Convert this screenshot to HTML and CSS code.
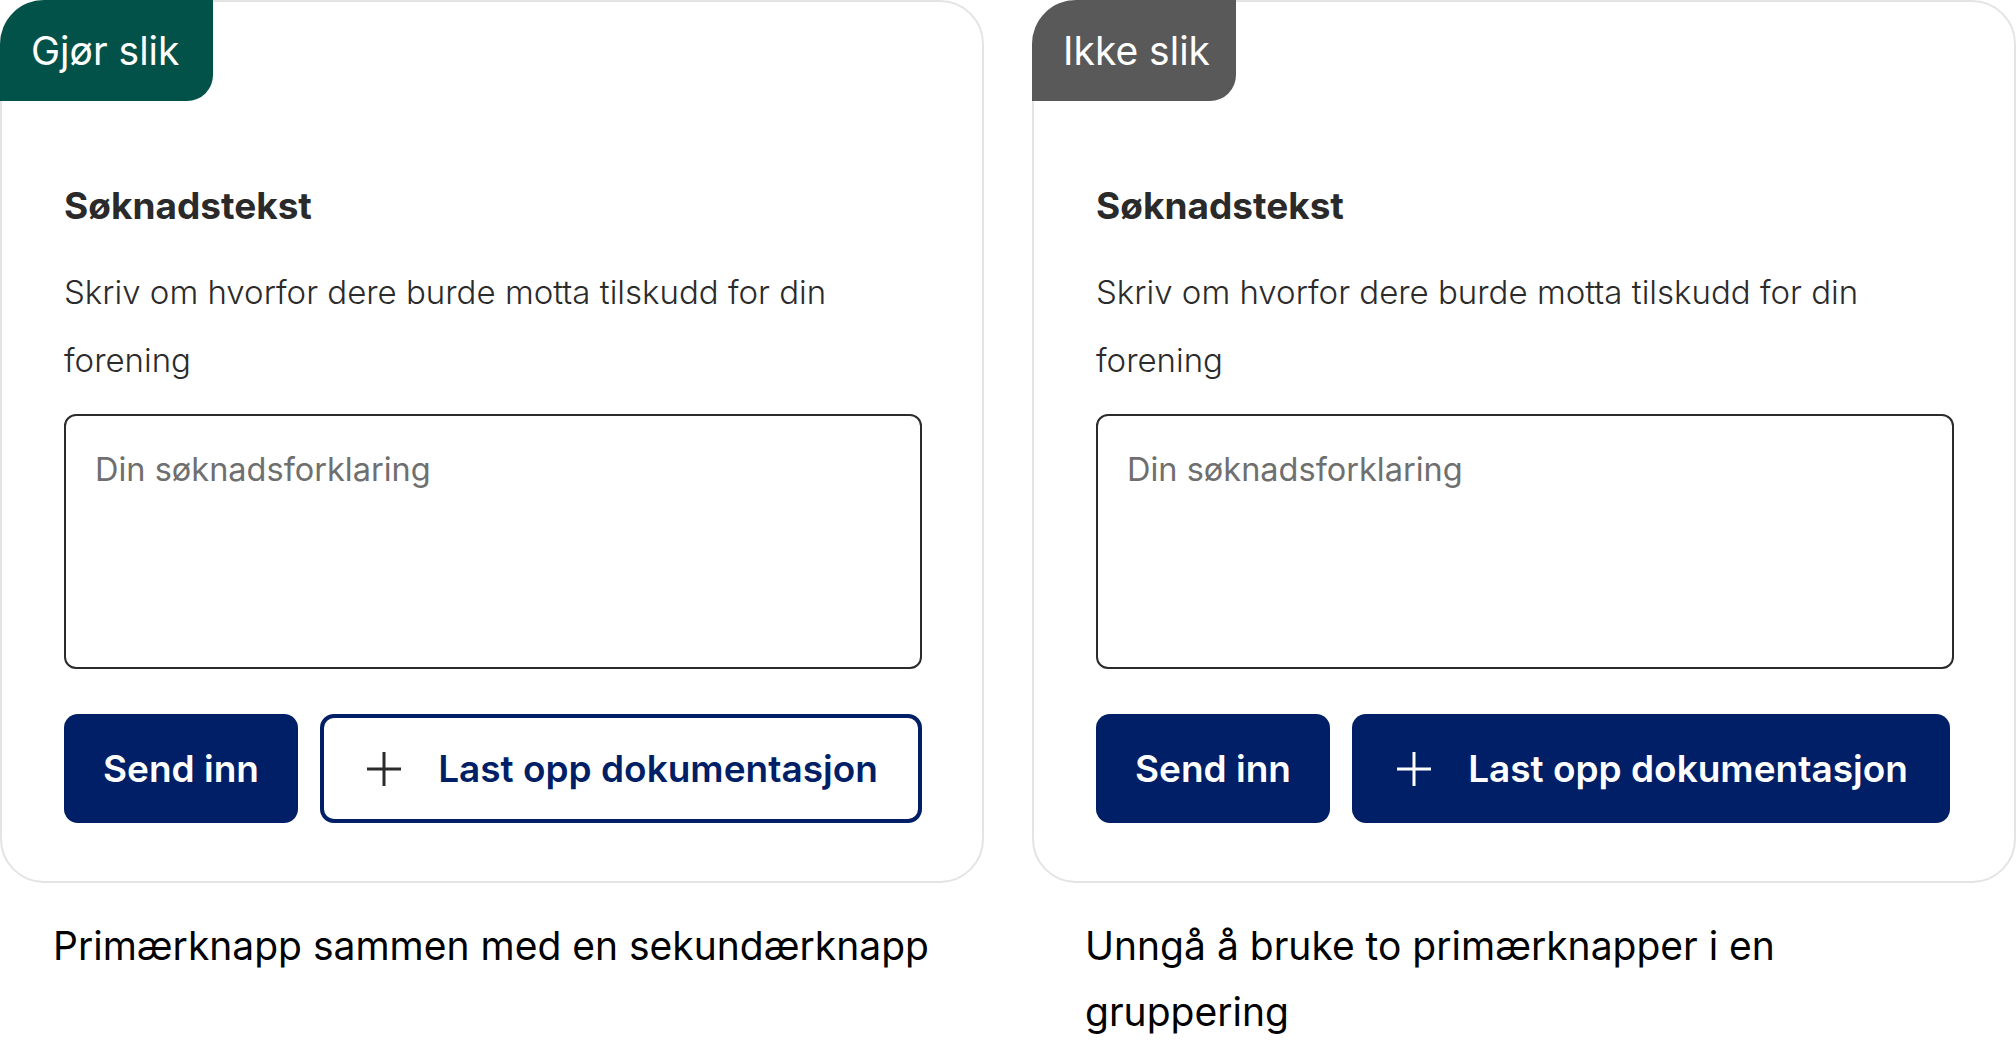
FILE: index.html
```html
<!DOCTYPE html>
<html lang="no">
<head>
<meta charset="UTF-8" />
<meta name="viewport" content="width=device-width, initial-scale=1.0" />
<title>Knappegruppe – Gjør slik / Ikke slik</title>
<link rel="stylesheet" href="styles.css">
</head>
<body>
<div class="examples">
    <div class="example">
        <div class="card">
            <span class="tag tag-do">Gjør slik</span>
            <div class="form">
                <h3>Søknadstekst</h3>
                <p class="hint">Skriv om hvorfor dere burde motta tilskudd for din forening</p>
                <textarea placeholder="Din søknadsforklaring"></textarea>
                <div class="buttons">
                    <button type="button" class="btn btn-primary">Send inn</button>
                    <button type="button" class="btn btn-secondary btn-wide">
                        <svg viewBox="0 0 40 40" width="40" height="40"><path d="M20 3v34M3 20h34" /></svg>
                        Last opp dokumentasjon
                    </button>
                </div>
            </div>
        </div>
        <p class="caption">Primærknapp sammen med en sekundærknapp</p>
    </div>
    <div class="example">
        <div class="card">
            <span class="tag tag-dont">Ikke slik</span>
            <div class="form">
                <h3>Søknadstekst</h3>
                <p class="hint">Skriv om hvorfor dere burde motta tilskudd for din forening</p>
                <textarea placeholder="Din søknadsforklaring"></textarea>
                <div class="buttons">
                    <button type="button" class="btn btn-primary">Send inn</button>
                    <button type="button" class="btn btn-primary btn-wide">
                        <svg viewBox="0 0 40 40" width="40" height="40"><path d="M20 3v34M3 20h34" /></svg>
                        Last opp dokumentasjon
                    </button>
                </div>
            </div>
        </div>
        <p class="caption">Unngå å bruke to primærknapper i en gruppering</p>
    </div>
</div>
</body>
</html>
```

FILE: styles.css
```css
body {
    margin: 0;
    background-color: #fff;
    font-family: Inter, "Liberation Sans", Arial, sans-serif;
    color: #2b2b2b;
}

.examples {
    display: flex;
    gap: 48px;
}

.example {
    flex: 1;
    min-width: 0;
}

.card {
    height: 883px;
    box-sizing: border-box;
    border: 2px solid #e4e4e4;
    border-radius: 44px;
}

.tag {
    display: inline-block;
    margin: -2px 0 0 -2px;
    width: 213px;
    height: 101px;
    box-sizing: border-box;
    padding: 26px 0 0 31px;
    font-size: 39px;
    line-height: 50px;
    color: #fff;
    border-radius: 44px 0 26px 0;
}

.tag-do {
    background-color: #03524a;
}

.tag-dont {
    width: 204px;
    background-color: #595959;
}

.form {
    padding: 83px 60px 0 62px;
}

h3 {
    margin: 0;
    font-size: 37px;
    line-height: 44px;
    font-weight: 700;
    color: #2a2a2a;
}

.hint {
    margin: 30px 0 20px;
    font-size: 33px;
    line-height: 68px;
    font-weight: 300;
    color: #2b2b2b;
}

textarea {
    display: block;
    width: 858px;
    height: 255px;
    box-sizing: border-box;
    padding: 34px 29px;
    border: 2px solid #2b2b2b;
    border-radius: 12px;
    font-family: inherit;
    font-size: 32.5px;
    line-height: 40px;
    resize: none;
}

textarea::placeholder {
    color: #6f6f6f;
}

.buttons {
    display: flex;
    gap: 22px;
    margin-top: 45px;
}

.btn {
    display: flex;
    align-items: center;
    justify-content: center;
    gap: 34px;
    height: 109px;
    box-sizing: border-box;
    border-radius: 14px;
    font-family: inherit;
    font-size: 37px;
    font-weight: 600;
    cursor: pointer;
}

.btn svg {
    fill: none;
    stroke-width: 3;
}

.btn-primary {
    width: 234px;
    border: none;
    background-color: #001f66;
    color: #fff;
}

.btn-primary svg {
    stroke: #fff;
}

.btn-secondary {
    border: 4px solid #001f66;
    background-color: #fff;
    color: #001f66;
}

.btn-secondary svg {
    stroke: #2b2b2b;
}

.btn-wide {
    width: 602px;
}

.btn-primary.btn-wide {
    width: 598px;
}

.caption {
    margin: 30px 0 0;
    padding: 0 45px 0 53px;
    font-size: 39px;
    line-height: 66px;
    color: #000;
}
```
